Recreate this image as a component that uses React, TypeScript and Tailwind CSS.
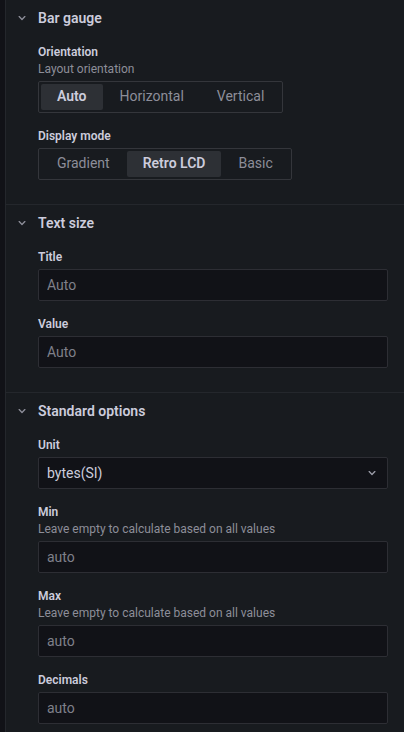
import { useId, useState, type ReactNode } from "react";

function AngleDown({ className = "" }: { className?: string }) {
  return (
    <svg viewBox="0 0 24 24" width="16" height="16" fill="currentColor" aria-hidden="true" className={className}>
      <path d="M17 9.17a1 1 0 0 0-1.41 0L12 12.71 8.46 9.17a1 1 0 0 0-1.41 0 1 1 0 0 0 0 1.42l4.24 4.24a1 1 0 0 0 1.42 0L17 10.59a1 1 0 0 0 0-1.42Z" />
    </svg>
  );
}

function Section({ title, children }: { title: string; children: ReactNode }) {
  const [open, setOpen] = useState(true);
  return (
    <section className="border-t border-[#24272c] pb-2 first:border-t-0">
      <h2>
        <button
          type="button"
          aria-expanded={open}
          onClick={() => setOpen(!open)}
          className="flex h-9 w-full items-center gap-2 px-2 text-left text-sm font-semibold"
        >
          <AngleDown className={open ? "text-[#8d8e99]" : "-rotate-90 text-[#8d8e99]"} />
          {title}
        </button>
      </h2>
      {open && <div className="pt-[9px] pr-4 pl-8">{children}</div>}
    </section>
  );
}

function Caption({ label, description }: { label: string; description?: string }) {
  return (
    <>
      <span className="block text-xs leading-[15px] font-semibold">{label}</span>
      {description && (
        <span className="mt-[2px] block text-xs leading-[15px] text-[#8d8e99]">{description}</span>
      )}
    </>
  );
}

function TextField({
  label,
  description,
  placeholder,
}: {
  label: string;
  description?: string;
  placeholder: string;
}) {
  const id = useId();
  return (
    <div className="mb-4">
      <label htmlFor={id} className="mb-1 block">
        <Caption label={label} description={description} />
      </label>
      <input
        id={id}
        type="text"
        placeholder={placeholder}
        className="block h-8 w-full rounded-xs border border-[#2d2e34] bg-[#111217] px-2 text-sm outline-none placeholder:text-[#7f808a] focus:border-[#6e9fff]"
      />
    </div>
  );
}

function RadioField({
  label,
  description,
  options,
  initial,
}: {
  label: string;
  description?: string;
  options: string[];
  initial: string;
}) {
  const name = useId();
  const [value, setValue] = useState(initial);
  return (
    <fieldset className="mb-4">
      <legend className="mb-1 block">
        <Caption label={label} description={description} />
      </legend>
      <div className="inline-flex h-8 gap-px rounded-xs border border-[#34363b] p-[2px] align-top">
        {options.map((option) => (
          <label
            key={option}
            className="relative flex cursor-pointer items-center rounded-xs px-4 pb-[2px] text-sm leading-6 text-[#8d8e99] has-checked:bg-[#2d3035] has-checked:font-semibold has-checked:text-[#ccccdc]"
          >
            <input
              type="radio"
              name={name}
              value={option}
              checked={value === option}
              onChange={() => setValue(option)}
              className="sr-only"
            />
            {option}
          </label>
        ))}
      </div>
    </fieldset>
  );
}

function UnitField() {
  const id = useId();
  return (
    <div className="mb-4">
      <label htmlFor={id} className="mb-1 block">
        <Caption label="Unit" />
      </label>
      <div className="relative">
        <select
          id={id}
          defaultValue="bytes(SI)"
          className="block h-8 w-full appearance-none rounded-xs border border-[#2d2e34] bg-[#111217] pr-8 pl-2 text-sm text-[#ccccdc] outline-none focus:border-[#6e9fff]"
        >
          <option>bytes(SI)</option>
          <option>bytes(IEC)</option>
          <option>bits(SI)</option>
        </select>
        <AngleDown className="pointer-events-none absolute top-2 right-2 text-[#9b9ca8]" />
      </div>
    </div>
  );
}

export default function App() {
  return (
    <div className="min-h-screen bg-[#111217] pl-[5px] font-['Roboto',sans-serif] text-[#ccccdc]">
      <main className="min-h-screen border-l border-[#24272c] bg-[#181b1f]">
        <Section title="Bar gauge">
          <RadioField
            label="Orientation"
            description="Layout orientation"
            options={["Auto", "Horizontal", "Vertical"]}
            initial="Auto"
          />
          <RadioField label="Display mode" options={["Gradient", "Retro LCD", "Basic"]} initial="Retro LCD" />
        </Section>
        <Section title="Text size">
          <TextField label="Title" placeholder="Auto" />
          <TextField label="Value" placeholder="Auto" />
        </Section>
        <Section title="Standard options">
          <UnitField />
          <TextField label="Min" description="Leave empty to calculate based on all values" placeholder="auto" />
          <TextField label="Max" description="Leave empty to calculate based on all values" placeholder="auto" />
          <TextField label="Decimals" placeholder="auto" />
        </Section>
      </main>
    </div>
  );
}
